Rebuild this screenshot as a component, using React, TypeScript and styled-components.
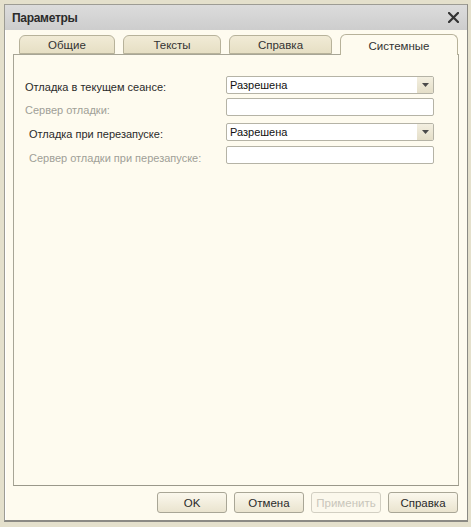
import React from "react";
import styled, { createGlobalStyle } from "styled-components";

const GlobalStyle = createGlobalStyle`
  html, body {
    margin: 0;
    padding: 0;
    background: #e4e0cc;
  }
  body {
    font-family: "Liberation Sans", Arial, sans-serif;
    font-size: 11px;
    color: #222;
  }
`;

const Window = styled.div`
  box-sizing: border-box;
  margin: 4px 0 0 4px;
  width: 464px;
  height: 518px;
  border: 1px solid #9d9c94;
  border-right-color: #8b8a84;
  border-bottom: 2px solid #8b8a84;
  background: #fefbef;
  display: flex;
  flex-direction: column;
  box-shadow: inset 1px 1px 0 #ffffff;
`;

const TitleBar = styled.div`
  height: 25px;
  display: flex;
  align-items: center;
  justify-content: space-between;
  padding: 0 8px 0 7px;
  background: linear-gradient(#dcdcdc, #cdcdcd);
  font-weight: bold;
  font-size: 12px;
  color: #2b2b2b;
  letter-spacing: -0.3px;
`;

const CloseButton = styled.div`
  width: 12px;
  height: 12px;
  display: flex;
  align-items: center;
  justify-content: center;
`;

const Body = styled.div`
  flex: 1;
  display: flex;
  flex-direction: column;
  padding: 4px 8px 0 8px;
`;

const TabRow = styled.div`
  display: flex;
  align-items: flex-end;
  gap: 8px;
  padding-left: 6px;
  height: 20px;
  position: relative;
  z-index: 1;
`;

const Tab = styled.div<{ $w: number; $active?: boolean }>`
  box-sizing: border-box;
  width: ${(p) => p.$w}px;
  height: ${(p) => (p.$active ? 21 : 19)}px;
  margin-bottom: ${(p) => (p.$active ? -1 : 0)}px;
  border: 1px solid #b7b29a;
  border-bottom: ${(p) => (p.$active ? "none" : "1px solid #b7b29a")};
  border-radius: 6px 6px 0 0;
  background: ${(p) =>
    p.$active ? "#fefbef" : "linear-gradient(#f1ebd6, #e6dfc4)"};
  display: flex;
  align-items: center;
  justify-content: center;
  padding-top: 1px;
  font-size: 11.5px;
  color: #333;
`;

const Panel = styled.div`
  box-sizing: border-box;
  height: 432px;
  border: 1px solid #a7a596;
  border-bottom-color: #9a988a;
  background: #fefbef;
  padding: 21px 0 0 0;
  display: flex;
  flex-direction: column;
`;

const Row = styled.div<{ $indent: number; $gap: number }>`
  display: flex;
  align-items: center;
  height: 18px;
  margin-top: ${(p) => p.$gap}px;
  padding-left: ${(p) => p.$indent}px;
`;

const Label = styled.div<{ $muted?: boolean; $w: number }>`
  width: ${(p) => p.$w}px;
  color: ${(p) => (p.$muted ? "#a09f97" : "#2a2a2a")};
  padding-top: ${(p) => (p.$muted ? 5 : 4)}px;
`;

const Field = styled.div`
  box-sizing: border-box;
  width: 208px;
  height: 18px;
  border: 1px solid #b5b3a6;
  border-radius: 2px;
  background: #ffffff;
  display: flex;
  align-items: center;
  justify-content: space-between;
  padding-left: 3px;
  color: #111;
`;

const DropButton = styled.div`
  width: 16px;
  height: 16px;
  background: linear-gradient(#f3efe0, #e4dec8);
  display: flex;
  align-items: center;
  justify-content: center;
  border-radius: 0 1px 1px 0;
`;

const Footer = styled.div`
  flex: 1;
  display: flex;
  justify-content: flex-end;
  align-items: flex-start;
  gap: 7px;
  padding: 6px 1px 0 0;
`;

const Button = styled.div<{ $disabled?: boolean }>`
  box-sizing: border-box;
  width: 70px;
  height: 21px;
  border: 1px solid ${(p) => (p.$disabled ? "#d2cfc2" : "#a9a696")};
  border-radius: 3px;
  background: ${(p) =>
    p.$disabled ? "#fbf8ec" : "linear-gradient(#fbf8ed, #eae4cf)"};
  display: flex;
  align-items: center;
  justify-content: center;
  font-size: 11.5px;
  color: ${(p) => (p.$disabled ? "#c9c6bb" : "#2a2a2a")};
`;

const Arrow = () => (
  <svg width="7" height="4" viewBox="0 0 7 4">
    <path d="M0 0h7L3.5 4z" fill="#4a4a4a" />
  </svg>
);

const Select = ({ value }: { value: string }) => (
  <Field>
    <span>{value}</span>
    <DropButton>
      <Arrow />
    </DropButton>
  </Field>
);

const App = () => (
  <>
    <GlobalStyle />
    <Window>
      <TitleBar>
        <span>Параметры</span>
        <CloseButton>
          <svg width="11" height="11" viewBox="0 0 11 11">
            <path
              d="M1 1l9 9M10 1l-9 9"
              stroke="#333"
              strokeWidth="2.2"
              strokeLinecap="square"
            />
          </svg>
        </CloseButton>
      </TitleBar>
      <Body>
        <TabRow>
          <Tab $w={96}>Общие</Tab>
          <Tab $w={98}>Тексты</Tab>
          <Tab $w={103}>Справка</Tab>
          <Tab $w={118} $active>
            Системные
          </Tab>
        </TabRow>
        <Panel>
          <Row $indent={11} $gap={0}>
            <Label $w={201}>Отладка в текущем сеансе:</Label>
            <Select value="Разрешена" />
          </Row>
          <Row $indent={11} $gap={4}>
            <Label $w={201} $muted>
              Сервер отладки:
            </Label>
            <Field />
          </Row>
          <Row $indent={15} $gap={7}>
            <Label $w={197}>Отладка при перезапуске:</Label>
            <Select value="Разрешена" />
          </Row>
          <Row $indent={15} $gap={5}>
            <Label $w={197} $muted>
              Сервер отладки при перезапуске:
            </Label>
            <Field />
          </Row>
        </Panel>
        <Footer>
          <Button>OK</Button>
          <Button>Отмена</Button>
          <Button $disabled>Применить</Button>
          <Button>Справка</Button>
        </Footer>
      </Body>
    </Window>
  </>
);

export default App;
